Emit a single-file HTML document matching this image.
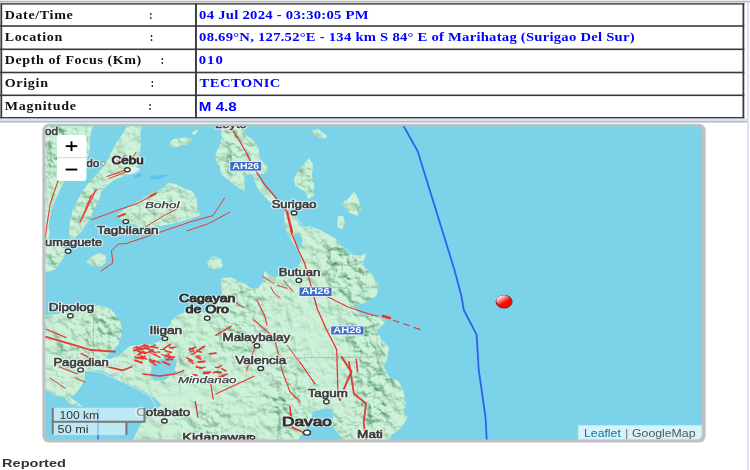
<!DOCTYPE html>
<html><head><meta charset="utf-8"><title>Earthquake Information</title>
<style>html,body{margin:0;padding:0;background:#fff;width:750px;height:470px;overflow:hidden}svg{display:block;filter:blur(0.3px)}</style>
</head><body>
<svg width="750" height="470" viewBox="0 0 750 470">
<rect x="0" y="0" width="750" height="1" fill="#e8eaee"/>
<rect x="0" y="1" width="750" height="1" fill="#a7b2c2"/>
<rect x="0" y="2" width="750" height="1" fill="#dcdcdc"/>
<rect x="747.4" y="1" width="1.3" height="469" fill="#c6d6f4"/>
<rect x="0" y="3.2" width="744.3" height="1.4" fill="#3a3a3a"/>
<rect x="0" y="3.2" width="1" height="115.2" fill="#888"/>
<rect x="1" y="3.2" width="1.2" height="115.2" fill="#3a3a3a"/>
<rect x="742.5" y="3.2" width="1.8" height="115.2" fill="#3a3a3a"/>
<rect x="0" y="117.0" width="744.3" height="1.6" fill="#3a3a3a"/>
<rect x="0" y="25.2" width="744.3" height="1.6" fill="#3a3a3a"/>
<rect x="0" y="48.5" width="744.3" height="1.6" fill="#3a3a3a"/>
<rect x="0" y="71.7" width="744.3" height="1.6" fill="#3a3a3a"/>
<rect x="0" y="94.5" width="744.3" height="1.6" fill="#3a3a3a"/>
<rect x="195" y="3.2" width="1.9" height="115.2" fill="#3a3a3a"/>
<rect x="0" y="118.6" width="747.4" height="2.2" fill="#dbe6f6"/>
<rect x="0" y="120.8" width="747.4" height="1.8" fill="#b4becc"/>
<text transform="translate(4.7,18.5) scale(1.08,1)" x="0" y="0" font-family="Liberation Serif" font-size="13.0" font-weight="bold" fill="#111" textLength="62.96" lengthAdjust="spacing" >Date/Time</text>
<text x="149.20000000000002" y="18.5" font-family="Liberation Serif" font-size="12.2" font-weight="bold" font-style="normal" fill="#111" textLength="3.2" lengthAdjust="spacingAndGlyphs" >:</text>
<text transform="translate(4.7,41.3) scale(1.08,1)" x="0" y="0" font-family="Liberation Serif" font-size="13.0" font-weight="bold" fill="#111" textLength="53.24" lengthAdjust="spacing" >Location</text>
<text x="149.9" y="41.3" font-family="Liberation Serif" font-size="12.2" font-weight="bold" font-style="normal" fill="#111" textLength="3.2" lengthAdjust="spacingAndGlyphs" >:</text>
<text transform="translate(4.7,64.3) scale(1.08,1)" x="0" y="0" font-family="Liberation Serif" font-size="13.0" font-weight="bold" fill="#111" textLength="126.48" lengthAdjust="spacing" >Depth of Focus (Km)</text>
<text x="160.70000000000002" y="64.3" font-family="Liberation Serif" font-size="12.2" font-weight="bold" font-style="normal" fill="#111" textLength="3.2" lengthAdjust="spacingAndGlyphs" >:</text>
<text transform="translate(4.7,87.1) scale(1.08,1)" x="0" y="0" font-family="Liberation Serif" font-size="13.0" font-weight="bold" fill="#111" textLength="40.09" lengthAdjust="spacing" >Origin</text>
<text x="150.8" y="87.1" font-family="Liberation Serif" font-size="12.2" font-weight="bold" font-style="normal" fill="#111" textLength="3.2" lengthAdjust="spacingAndGlyphs" >:</text>
<text transform="translate(4.7,110.0) scale(1.08,1)" x="0" y="0" font-family="Liberation Serif" font-size="13.0" font-weight="bold" fill="#111" textLength="66.11" lengthAdjust="spacing" >Magnitude</text>
<text x="148.4" y="110.0" font-family="Liberation Serif" font-size="12.2" font-weight="bold" font-style="normal" fill="#111" textLength="3.2" lengthAdjust="spacingAndGlyphs" >:</text>
<text transform="translate(199.1,18.5) scale(1.12,1)" x="0" y="0" font-family="Liberation Serif" font-size="13.1" font-weight="bold" fill="#0000ff" textLength="151.43" lengthAdjust="spacing" >04 Jul 2024 - 03:30:05 PM</text>
<text transform="translate(199.1,41.3) scale(1.12,1)" x="0" y="0" font-family="Liberation Serif" font-size="13.1" font-weight="bold" fill="#0000ff" textLength="388.84" lengthAdjust="spacing" >08.69°N, 127.52°E - 134 km S 84° E of Marihatag (Surigao Del Sur)</text>
<text transform="translate(198.8,64.1) scale(1.12,1)" x="0" y="0" font-family="Liberation Serif" font-size="13.1" font-weight="bold" fill="#0000ff" textLength="21.43" lengthAdjust="spacing" >010</text>
<text transform="translate(199.6,86.6) scale(1.12,1)" x="0" y="0" font-family="Liberation Serif" font-size="13.1" font-weight="bold" fill="#0000ff" textLength="72.14" lengthAdjust="spacing" >TECTONIC</text>
<text x="198.8" y="110.8" font-family="Liberation Sans" font-size="12.8" font-weight="bold" font-style="normal" fill="#0000ff" textLength="38.0" lengthAdjust="spacingAndGlyphs" >M 4.8</text>
<text x="2.0" y="467.0" font-family="Liberation Sans" font-size="11.7" font-weight="bold" font-style="normal" fill="#333" textLength="64.0" lengthAdjust="spacingAndGlyphs" >Reported</text>
<clipPath id="mc"><rect x="45.3" y="126.2" width="656.5000000000001" height="313.2" rx="4.5"/></clipPath>
<rect x="42.3" y="123.8" width="663.3000000000001" height="318.8" rx="6.5" fill="#c0c0c0"/>
<g clip-path="url(#mc)">
<rect x="42.3" y="123.8" width="663.3000000000001" height="318.8" fill="#7bd3e9"/>
<filter id="terr" x="40" y="120" width="670" height="330" filterUnits="userSpaceOnUse" color-interpolation-filters="sRGB"><feTurbulence type="fractalNoise" baseFrequency="0.1" numOctaves="4" seed="4" result="noise"/><feDiffuseLighting in="noise" surfaceScale="3.2" diffuseConstant="1" lighting-color="#ffffff" result="light"><feDistantLight azimuth="300" elevation="60"/></feDiffuseLighting><feColorMatrix in="light" type="matrix" values="0 0 0 0 0.30  0 0 0 0 0.56  0 0 0 0 0.40  -2.2 0 0 0 2.0" result="shade"/><feComposite in="shade" in2="SourceAlpha" operator="in"/></filter>
<filter id="mblur" x="0" y="0" width="750" height="470" filterUnits="userSpaceOnUse"><feGaussianBlur stdDeviation="9"/></filter>
<mask id="mtn" maskUnits="userSpaceOnUse" x="0" y="0" width="750" height="470"><rect x="0" y="0" width="750" height="470" fill="#585858"/><g filter="url(#mblur)"><ellipse cx="60" cy="150" rx="22" ry="30" transform="rotate(0 60 150)" fill="#fff" fill-opacity="1.0"/><ellipse cx="88" cy="205" rx="8" ry="22" transform="rotate(30 88 205)" fill="#fff" fill-opacity="0.8"/><ellipse cx="235" cy="150" rx="14" ry="22" transform="rotate(0 235 150)" fill="#fff" fill-opacity="0.9"/><ellipse cx="305" cy="180" rx="8" ry="18" transform="rotate(0 305 180)" fill="#fff" fill-opacity="0.8"/><ellipse cx="352" cy="205" rx="6" ry="10" transform="rotate(0 352 205)" fill="#fff" fill-opacity="0.7"/><ellipse cx="345" cy="270" rx="22" ry="30" transform="rotate(-30 345 270)" fill="#fff" fill-opacity="1.0"/><ellipse cx="365" cy="330" rx="16" ry="30" transform="rotate(0 365 330)" fill="#fff" fill-opacity="1.0"/><ellipse cx="375" cy="395" rx="18" ry="40" transform="rotate(0 375 395)" fill="#fff" fill-opacity="1.0"/><ellipse cx="330" cy="440" rx="16" ry="20" transform="rotate(0 330 440)" fill="#fff" fill-opacity="0.8"/><ellipse cx="245" cy="300" rx="18" ry="10" transform="rotate(20 245 300)" fill="#fff" fill-opacity="1.0"/><ellipse cx="240" cy="335" rx="20" ry="14" transform="rotate(0 240 335)" fill="#fff" fill-opacity="1.0"/><ellipse cx="285" cy="400" rx="16" ry="35" transform="rotate(0 285 400)" fill="#fff" fill-opacity="0.9"/><ellipse cx="210" cy="425" rx="18" ry="14" transform="rotate(0 210 425)" fill="#fff" fill-opacity="0.8"/><ellipse cx="105" cy="330" rx="16" ry="20" transform="rotate(0 105 330)" fill="#fff" fill-opacity="1.0"/><ellipse cx="70" cy="350" rx="20" ry="14" transform="rotate(0 70 350)" fill="#fff" fill-opacity="0.7"/><ellipse cx="175" cy="362" rx="14" ry="12" transform="rotate(0 175 362)" fill="#fff" fill-opacity="0.7"/><ellipse cx="60" cy="250" rx="12" ry="18" transform="rotate(0 60 250)" fill="#fff" fill-opacity="0.8"/><ellipse cx="160" cy="205" rx="25" ry="12" transform="rotate(-20 160 205)" fill="#fff" fill-opacity="0.6"/><ellipse cx="316" cy="340" rx="9" ry="45" transform="rotate(-10 316 340)" fill="#000" fill-opacity="0.8"/><ellipse cx="180" cy="405" rx="30" ry="18" transform="rotate(0 180 405)" fill="#000" fill-opacity="0.8"/><ellipse cx="130" cy="410" rx="14" ry="10" transform="rotate(0 130 410)" fill="#000" fill-opacity="0.8"/><ellipse cx="250" cy="275" rx="10" ry="6" transform="rotate(0 250 275)" fill="#000" fill-opacity="0.8"/></g></mask>
<polygon points="40.0,120.0 93.0,120.0 93.0,126.0 91.0,132.0 90.0,140.0 89.5,152.0 85.0,164.0 74.0,175.0 64.5,182.0 60.1,189.4 56.3,198.3 53.6,204.0 50.2,216.0 48.5,226.0 50.0,232.0 48.0,240.0 58.0,246.0 66.0,249.0 65.0,255.5 60.0,263.0 55.0,269.5 47.0,272.0 40.0,273.0" fill="#cdf2d9" />
<polygon points="126.5,120.0 142.7,120.0 142.7,125.8 140.1,132.2 141.0,143.3 140.1,151.8 139.3,157.0 137.5,164.0 136.0,168.0 130.0,173.5 124.0,176.0 113.0,180.5 104.5,188.0 101.0,192.0 99.7,198.3 95.9,206.0 92.0,213.6 89.5,220.0 86.0,224.0 81.0,232.6 73.0,239.0 69.5,238.0 69.0,232.0 70.3,220.0 72.9,209.8 76.7,202.1 80.5,194.5 85.7,186.8 90.8,180.4 97.1,174.0 103.5,166.4 107.8,159.4 112.0,150.9 117.1,141.6 123.1,133.1 127.3,125.8" fill="#cdf2d9" />
<polygon points="117.6,214.6 124.3,209.4 134.7,203.4 143.7,197.5 154.0,192.0 161.5,189.0 168.0,183.0 175.5,184.0 184.9,188.7 191.9,191.0 196.5,198.0 197.7,205.0 196.5,209.8 201.2,214.4 196.5,216.8 190.0,219.0 182.4,221.0 173.5,223.5 161.5,225.8 149.6,227.3 139.2,226.5 128.7,222.8 119.4,218.0" fill="#cdf2d9" />
<polygon points="86.0,262.0 92.0,256.0 100.0,253.0 106.0,255.0 106.0,262.0 101.0,266.5 92.0,266.0" fill="#cdf2d9" />
<polygon points="207.0,262.0 214.0,256.5 221.0,259.0 223.0,266.0 217.0,269.0 209.0,268.0" fill="#cdf2d9" />
<polygon points="168.3,145.0 173.0,139.0 181.0,138.0 186.0,137.5 192.9,139.0 190.0,144.0 182.0,145.0 175.0,147.6" fill="#cdf2d9" />
<polygon points="191.4,133.0 196.0,129.7 198.9,131.0 194.0,134.9" fill="#cdf2d9" />
<polygon points="215.0,120.0 243.0,120.0 242.1,127.3 245.6,134.4 252.7,139.7 258.0,146.7 259.8,153.8 261.5,160.9 266.8,166.2 267.7,171.5 263.3,174.0 250.0,174.5 244.0,176.0 245.0,183.0 244.5,190.9 240.3,189.1 233.3,183.8 226.2,178.5 220.9,173.2 220.0,166.2 215.6,160.9 215.6,153.8 220.0,145.0 221.8,137.9 220.9,129.1 218.0,120.0" fill="#cdf2d9" />
<polygon points="253.0,175.0 258.0,176.0 262.0,184.0 268.0,190.0 274.0,197.0 277.0,204.0 273.0,205.0 267.0,199.0 260.0,192.0 256.0,185.0" fill="#cdf2d9" />
<polygon points="312.0,130.0 318.0,129.0 327.0,136.0 325.0,139.0 318.0,137.0 313.0,134.0" fill="#cdf2d9" />
<polygon points="309.3,158.3 313.2,164.6 311.9,176.1 314.4,186.3 313.2,196.5 308.0,199.1 305.5,191.4 295.3,186.3 294.0,178.7 297.9,171.0 303.0,164.6" fill="#cdf2d9" />
<polygon points="354.0,191.4 358.0,198.0 361.6,209.3 357.0,215.7 350.0,213.0 341.2,202.9 348.0,199.0" fill="#cdf2d9" />
<polygon points="338.0,216.0 343.0,215.7 345.0,222.0 342.0,229.7 337.0,227.0" fill="#cdf2d9" />
<polygon points="210.0,257.0 216.0,256.4 222.0,262.0 220.0,269.0 212.0,268.0 210.0,263.0" fill="#cdf2d9" />
<polygon points="40.0,316.0 45.7,315.4 57.6,313.7 69.5,312.0 86.6,306.9 100.2,305.2 110.4,308.6 117.2,317.1 120.5,322.0 122.4,331.2 118.7,344.3 111.2,351.7 105.6,357.3 109.3,359.2 118.7,355.5 129.9,346.1 142.9,344.3 156.0,342.4 162.0,339.5 162.6,338.0 167.7,327.9 171.1,321.1 176.2,316.0 188.1,310.9 205.1,312.6 217.0,304.0 222.2,293.8 220.5,278.5 230.8,277.2 242.0,282.0 251.6,288.4 258.0,288.4 262.8,282.0 264.4,270.8 267.6,274.0 274.0,277.2 282.0,275.6 293.2,274.0 298.3,266.6 301.4,260.0 298.0,251.4 292.9,242.9 287.8,234.4 284.4,222.5 284.4,212.0 288.0,208.0 292.0,211.0 297.0,220.0 300.9,227.4 309.8,225.9 320.2,230.3 329.2,234.8 335.1,237.8 339.6,245.2 348.6,254.2 360.5,255.7 366.4,252.7 362.8,265.0 372.0,274.5 379.0,286.2 376.8,295.6 365.0,302.6 353.4,307.3 360.4,314.3 376.8,316.6 386.2,317.8 383.9,323.7 376.8,330.7 381.6,339.8 388.9,347.1 387.7,356.9 384.0,366.7 388.9,376.5 398.7,381.4 403.6,391.2 406.1,403.4 403.6,413.2 407.3,418.1 401.2,427.9 391.4,435.2 386.5,445.0 345.8,445.0 337.5,432.6 332.0,425.6 333.3,416.0 332.0,409.0 325.0,408.4 312.6,411.8 311.0,421.5 304.3,431.0 294.6,445.0 130.0,445.0 141.0,423.5 148.5,416.0 161.6,404.8 156.0,399.2 146.7,392.7 137.3,388.0 128.0,383.3 118.7,380.5 111.2,375.0 100.0,370.3 85.0,371.0 85.0,378.7 81.3,386.1 75.7,393.6 70.1,397.3 75.7,401.0 83.2,406.7 70.1,404.8 64.5,397.3 55.2,395.5 45.9,389.9 40.0,387.0" fill="#cdf2d9" />
<g mask="url(#mtn)"><g filter="url(#terr)">
<polygon points="40.0,120.0 93.0,120.0 93.0,126.0 91.0,132.0 90.0,140.0 89.5,152.0 85.0,164.0 74.0,175.0 64.5,182.0 60.1,189.4 56.3,198.3 53.6,204.0 50.2,216.0 48.5,226.0 50.0,232.0 48.0,240.0 58.0,246.0 66.0,249.0 65.0,255.5 60.0,263.0 55.0,269.5 47.0,272.0 40.0,273.0" fill="#cdf2d9" />
<polygon points="126.5,120.0 142.7,120.0 142.7,125.8 140.1,132.2 141.0,143.3 140.1,151.8 139.3,157.0 137.5,164.0 136.0,168.0 130.0,173.5 124.0,176.0 113.0,180.5 104.5,188.0 101.0,192.0 99.7,198.3 95.9,206.0 92.0,213.6 89.5,220.0 86.0,224.0 81.0,232.6 73.0,239.0 69.5,238.0 69.0,232.0 70.3,220.0 72.9,209.8 76.7,202.1 80.5,194.5 85.7,186.8 90.8,180.4 97.1,174.0 103.5,166.4 107.8,159.4 112.0,150.9 117.1,141.6 123.1,133.1 127.3,125.8" fill="#cdf2d9" />
<polygon points="117.6,214.6 124.3,209.4 134.7,203.4 143.7,197.5 154.0,192.0 161.5,189.0 168.0,183.0 175.5,184.0 184.9,188.7 191.9,191.0 196.5,198.0 197.7,205.0 196.5,209.8 201.2,214.4 196.5,216.8 190.0,219.0 182.4,221.0 173.5,223.5 161.5,225.8 149.6,227.3 139.2,226.5 128.7,222.8 119.4,218.0" fill="#cdf2d9" />
<polygon points="86.0,262.0 92.0,256.0 100.0,253.0 106.0,255.0 106.0,262.0 101.0,266.5 92.0,266.0" fill="#cdf2d9" />
<polygon points="207.0,262.0 214.0,256.5 221.0,259.0 223.0,266.0 217.0,269.0 209.0,268.0" fill="#cdf2d9" />
<polygon points="168.3,145.0 173.0,139.0 181.0,138.0 186.0,137.5 192.9,139.0 190.0,144.0 182.0,145.0 175.0,147.6" fill="#cdf2d9" />
<polygon points="191.4,133.0 196.0,129.7 198.9,131.0 194.0,134.9" fill="#cdf2d9" />
<polygon points="215.0,120.0 243.0,120.0 242.1,127.3 245.6,134.4 252.7,139.7 258.0,146.7 259.8,153.8 261.5,160.9 266.8,166.2 267.7,171.5 263.3,174.0 250.0,174.5 244.0,176.0 245.0,183.0 244.5,190.9 240.3,189.1 233.3,183.8 226.2,178.5 220.9,173.2 220.0,166.2 215.6,160.9 215.6,153.8 220.0,145.0 221.8,137.9 220.9,129.1 218.0,120.0" fill="#cdf2d9" />
<polygon points="253.0,175.0 258.0,176.0 262.0,184.0 268.0,190.0 274.0,197.0 277.0,204.0 273.0,205.0 267.0,199.0 260.0,192.0 256.0,185.0" fill="#cdf2d9" />
<polygon points="312.0,130.0 318.0,129.0 327.0,136.0 325.0,139.0 318.0,137.0 313.0,134.0" fill="#cdf2d9" />
<polygon points="309.3,158.3 313.2,164.6 311.9,176.1 314.4,186.3 313.2,196.5 308.0,199.1 305.5,191.4 295.3,186.3 294.0,178.7 297.9,171.0 303.0,164.6" fill="#cdf2d9" />
<polygon points="354.0,191.4 358.0,198.0 361.6,209.3 357.0,215.7 350.0,213.0 341.2,202.9 348.0,199.0" fill="#cdf2d9" />
<polygon points="338.0,216.0 343.0,215.7 345.0,222.0 342.0,229.7 337.0,227.0" fill="#cdf2d9" />
<polygon points="210.0,257.0 216.0,256.4 222.0,262.0 220.0,269.0 212.0,268.0 210.0,263.0" fill="#cdf2d9" />
<polygon points="40.0,316.0 45.7,315.4 57.6,313.7 69.5,312.0 86.6,306.9 100.2,305.2 110.4,308.6 117.2,317.1 120.5,322.0 122.4,331.2 118.7,344.3 111.2,351.7 105.6,357.3 109.3,359.2 118.7,355.5 129.9,346.1 142.9,344.3 156.0,342.4 162.0,339.5 162.6,338.0 167.7,327.9 171.1,321.1 176.2,316.0 188.1,310.9 205.1,312.6 217.0,304.0 222.2,293.8 220.5,278.5 230.8,277.2 242.0,282.0 251.6,288.4 258.0,288.4 262.8,282.0 264.4,270.8 267.6,274.0 274.0,277.2 282.0,275.6 293.2,274.0 298.3,266.6 301.4,260.0 298.0,251.4 292.9,242.9 287.8,234.4 284.4,222.5 284.4,212.0 288.0,208.0 292.0,211.0 297.0,220.0 300.9,227.4 309.8,225.9 320.2,230.3 329.2,234.8 335.1,237.8 339.6,245.2 348.6,254.2 360.5,255.7 366.4,252.7 362.8,265.0 372.0,274.5 379.0,286.2 376.8,295.6 365.0,302.6 353.4,307.3 360.4,314.3 376.8,316.6 386.2,317.8 383.9,323.7 376.8,330.7 381.6,339.8 388.9,347.1 387.7,356.9 384.0,366.7 388.9,376.5 398.7,381.4 403.6,391.2 406.1,403.4 403.6,413.2 407.3,418.1 401.2,427.9 391.4,435.2 386.5,445.0 345.8,445.0 337.5,432.6 332.0,425.6 333.3,416.0 332.0,409.0 325.0,408.4 312.6,411.8 311.0,421.5 304.3,431.0 294.6,445.0 130.0,445.0 141.0,423.5 148.5,416.0 161.6,404.8 156.0,399.2 146.7,392.7 137.3,388.0 128.0,383.3 118.7,380.5 111.2,375.0 100.0,370.3 85.0,371.0 85.0,378.7 81.3,386.1 75.7,393.6 70.1,397.3 75.7,401.0 83.2,406.7 70.1,404.8 64.5,397.3 55.2,395.5 45.9,389.9 40.0,387.0" fill="#cdf2d9" />
</g></g>
<polygon points="152.0,366.0 160.0,359.0 170.0,357.5 177.0,361.0 174.0,372.0 165.0,380.0 155.0,381.0 150.0,375.0" fill="#7bd3e9" />
<polygon points="293.5,233.5 299.0,233.0 302.4,239.0 302.0,248.0 297.0,247.0 294.0,241.0" fill="#7bd3e9" />
<ellipse cx="132" cy="171" rx="8" ry="3" fill="#eef6f2" opacity="0.8" transform="rotate(-15 132 171)"/>
<ellipse cx="138" cy="176" rx="4" ry="1.3" fill="#5dc1ee" transform="rotate(-25 138 176)"/>
<ellipse cx="153" cy="177" rx="3.5" ry="1.2" fill="#5dc1ee" transform="rotate(-25 153 177)"/>
<ellipse cx="160" cy="177" rx="8" ry="1.5" fill="#5dc1ee" transform="rotate(-15 160 177)"/>
<polyline points="207.0,318.0 222.0,326.0 240.0,338.0 257.0,346.0 261.0,368.0 275.0,385.0 290.0,405.0 307.0,432.0" fill="none" stroke="#d9e2dc" stroke-width="1.0" stroke-linejoin="round" stroke-linecap="round" opacity="0.9"/>
<polyline points="299.0,280.0 306.0,296.0 326.0,318.0 345.0,340.0 336.0,370.0 326.0,402.0 318.0,410.0" fill="none" stroke="#d9e2dc" stroke-width="1.0" stroke-linejoin="round" stroke-linecap="round" opacity="0.9"/>
<polyline points="165.0,338.0 176.0,352.0 180.0,370.0 164.0,421.0" fill="none" stroke="#d9e2dc" stroke-width="1.0" stroke-linejoin="round" stroke-linecap="round" opacity="0.9"/>
<polyline points="80.0,370.0 100.0,372.0 125.0,383.0 150.0,396.0 164.0,421.0" fill="none" stroke="#d9e2dc" stroke-width="1.0" stroke-linejoin="round" stroke-linecap="round" opacity="0.9"/>
<polyline points="70.0,316.0 82.0,330.0 80.0,370.0" fill="none" stroke="#d9e2dc" stroke-width="1.0" stroke-linejoin="round" stroke-linecap="round" opacity="0.9"/>
<polyline points="294.0,213.0 300.0,222.0 306.0,234.0 320.0,236.0 345.0,248.0 360.0,262.0 372.0,290.0" fill="none" stroke="#d9e2dc" stroke-width="1.0" stroke-linejoin="round" stroke-linecap="round" opacity="0.9"/>
<polyline points="326.0,402.0 345.0,410.0 372.0,430.0" fill="none" stroke="#d9e2dc" stroke-width="1.0" stroke-linejoin="round" stroke-linecap="round" opacity="0.9"/>
<polyline points="280.0,358.0 381.0,357.0" fill="none" stroke="#8fa497" stroke-width="0.7" stroke-linejoin="round" stroke-linecap="round" stroke-dasharray="1.5,1.5"/>
<polyline points="93.4,310.0 93.4,362.0" fill="none" stroke="#8fa497" stroke-width="0.7" stroke-linejoin="round" stroke-linecap="round" stroke-dasharray="1.5,1.5"/>
<polyline points="101.0,271.0 113.0,262.8 111.4,251.0 118.2,244.0 125.8,243.7 152.6,234.7 190.0,222.0 212.9,215.6 224.6,198.0" fill="none" stroke="#e53935" stroke-width="1.0" stroke-linejoin="round" stroke-linecap="round" />
<polyline points="187.2,230.8 208.2,223.8 230.0,212.0" fill="none" stroke="#e53935" stroke-width="1.0" stroke-linejoin="round" stroke-linecap="round" />
<polyline points="91.5,219.8 119.8,209.4 137.7,203.4 149.6,196.7 155.0,194.0" fill="none" stroke="#e53935" stroke-width="1.0" stroke-linejoin="round" stroke-linecap="round" />
<polyline points="143.7,228.0 164.5,215.3 178.0,208.6" fill="none" stroke="#e53935" stroke-width="1.0" stroke-linejoin="round" stroke-linecap="round" />
<polyline points="90.0,197.5 96.0,190.0" fill="none" stroke="#e53935" stroke-width="1.0" stroke-linejoin="round" stroke-linecap="round" />
<polyline points="150.0,196.5 155.5,193.5" fill="none" stroke="#e53935" stroke-width="2.2" stroke-linejoin="round" stroke-linecap="round" />
<polyline points="118.5,216.5 125.0,214.0" fill="none" stroke="#e53935" stroke-width="2.0" stroke-linejoin="round" stroke-linecap="round" />
<polyline points="62.0,170.0 57.0,183.6 50.2,204.0 46.8,226.0 45.0,240.0" fill="none" stroke="#e53935" stroke-width="1.1" stroke-linejoin="round" stroke-linecap="round" />
<polyline points="96.0,190.0 89.0,204.0 84.0,214.0 80.0,222.0" fill="none" stroke="#e53935" stroke-width="1.3" stroke-linejoin="round" stroke-linecap="round" />
<polyline points="91.0,196.0 86.0,208.0 82.0,218.0" fill="none" stroke="#e53935" stroke-width="1.1" stroke-linejoin="round" stroke-linecap="round" />
<polyline points="107.0,176.5 124.0,170.5" fill="none" stroke="#e53935" stroke-width="1.2" stroke-linejoin="round" stroke-linecap="round" />
<polyline points="109.0,178.5 126.0,172.0" fill="none" stroke="#e53935" stroke-width="1.0" stroke-linejoin="round" stroke-linecap="round" />
<polyline points="113.8,164.3 125.7,154.9" fill="none" stroke="#e53935" stroke-width="1.0" stroke-linejoin="round" stroke-linecap="round" />
<polyline points="129.0,164.3 136.0,152.3" fill="none" stroke="#e53935" stroke-width="1.0" stroke-linejoin="round" stroke-linecap="round" />
<polyline points="228.5,124.0 239.0,140.0 246.0,152.0 252.6,165.6 265.0,185.0 277.0,199.0 287.7,213.0 291.2,232.3 298.7,250.7 304.4,262.8 310.4,283.5 317.4,309.2 326.8,330.3 336.7,349.6 338.0,393.7" fill="none" stroke="#e53935" stroke-width="1.3" stroke-linejoin="round" stroke-linecap="round" />
<polyline points="287.0,212.0 290.0,224.0 292.0,232.0" fill="none" stroke="#e53935" stroke-width="2.4" stroke-linejoin="round" stroke-linecap="round" />
<polyline points="319.8,292.8 347.8,306.9 372.0,315.0" fill="none" stroke="#e53935" stroke-width="1.1" stroke-linejoin="round" stroke-linecap="round" />
<polyline points="262.8,276.4 274.0,283.6" fill="none" stroke="#e53935" stroke-width="1.0" stroke-linejoin="round" stroke-linecap="round" />
<polyline points="270.8,286.8 274.0,293.2 280.4,298.0" fill="none" stroke="#e53935" stroke-width="1.0" stroke-linejoin="round" stroke-linecap="round" />
<polyline points="277.2,285.2 286.8,288.4" fill="none" stroke="#e53935" stroke-width="1.0" stroke-linejoin="round" stroke-linecap="round" />
<polyline points="283.6,280.4 293.2,291.6" fill="none" stroke="#e53935" stroke-width="1.0" stroke-linejoin="round" stroke-linecap="round" />
<polyline points="257.0,300.0 264.6,315.7 267.0,325.0" fill="none" stroke="#e53935" stroke-width="1.1" stroke-linejoin="round" stroke-linecap="round" />
<polyline points="254.0,320.0 274.5,337.9 282.2,371.0 289.9,391.5 300.0,401.8" fill="none" stroke="#e53935" stroke-width="1.1" stroke-linejoin="round" stroke-linecap="round" />
<polyline points="287.3,345.5 315.4,383.9" fill="none" stroke="#e53935" stroke-width="1.0" stroke-linejoin="round" stroke-linecap="round" />
<polyline points="256.6,343.0 246.4,371.0" fill="none" stroke="#e53935" stroke-width="1.0" stroke-linejoin="round" stroke-linecap="round" />
<polyline points="215.8,335.3 231.1,326.4" fill="none" stroke="#e53935" stroke-width="1.5" stroke-linejoin="round" stroke-linecap="round" />
<polyline points="215.8,394.0 254.0,376.2" fill="none" stroke="#e53935" stroke-width="1.1" stroke-linejoin="round" stroke-linecap="round" />
<polyline points="210.7,383.9 213.2,399.2" fill="none" stroke="#e53935" stroke-width="1.2" stroke-linejoin="round" stroke-linecap="round" />
<polyline points="195.3,401.8 197.9,417.0" fill="none" stroke="#e53935" stroke-width="1.4" stroke-linejoin="round" stroke-linecap="round" />
<polyline points="289.9,406.9 292.4,427.3 302.6,432.4" fill="none" stroke="#e53935" stroke-width="1.6" stroke-linejoin="round" stroke-linecap="round" />
<polyline points="236.5,303.0 244.0,308.0" fill="none" stroke="#e53935" stroke-width="1.0" stroke-linejoin="round" stroke-linecap="round" />
<polyline points="300.0,361.8 314.7,383.9" fill="none" stroke="#e53935" stroke-width="1.0" stroke-linejoin="round" stroke-linecap="round" />
<polyline points="341.6,357.0 351.4,371.6 344.0,388.8" fill="none" stroke="#e53935" stroke-width="2.0" stroke-linejoin="round" stroke-linecap="round" />
<polyline points="349.0,361.8 353.9,393.7 366.0,403.5 363.7,423.0 366.0,441.0" fill="none" stroke="#e53935" stroke-width="1.8" stroke-linejoin="round" stroke-linecap="round" />
<polyline points="356.3,359.4 357.6,371.6" fill="none" stroke="#e53935" stroke-width="1.6" stroke-linejoin="round" stroke-linecap="round" />
<polyline points="338.0,393.7 340.0,400.0" fill="none" stroke="#e53935" stroke-width="2.0" stroke-linejoin="round" stroke-linecap="round" />
<polyline points="45.9,336.8 72.0,344.3 90.7,350.0 115.0,351.7" fill="none" stroke="#e53935" stroke-width="1.8" stroke-linejoin="round" stroke-linecap="round" />
<polyline points="81.3,353.6 107.5,366.7 122.4,370.4 131.7,366.7" fill="none" stroke="#e53935" stroke-width="1.6" stroke-linejoin="round" stroke-linecap="round" />
<polyline points="45.7,329.0 66.1,337.6" fill="none" stroke="#e53935" stroke-width="1.2" stroke-linejoin="round" stroke-linecap="round" />
<polyline points="59.0,366.7 77.6,374.0" fill="none" stroke="#e53935" stroke-width="1.1" stroke-linejoin="round" stroke-linecap="round" />
<polyline points="143.0,374.0 159.7,376.0 174.7,374.0 184.0,370.4" fill="none" stroke="#e53935" stroke-width="1.3" stroke-linejoin="round" stroke-linecap="round" />
<polyline points="50.0,378.0 65.0,388.0" fill="none" stroke="#e53935" stroke-width="1.0" stroke-linejoin="round" stroke-linecap="round" />
<polyline points="75.0,378.0 85.0,382.0" fill="none" stroke="#e53935" stroke-width="1.0" stroke-linejoin="round" stroke-linecap="round" />
<polyline points="145.0,348.4 148.3,349.0" fill="none" stroke="#e53935" stroke-width="1.643058405168027" stroke-linejoin="round" stroke-linecap="round" />
<polyline points="146.5,346.9 149.7,347.0" fill="none" stroke="#e53935" stroke-width="1.520374820394863" stroke-linejoin="round" stroke-linecap="round" />
<polyline points="135.6,347.5 142.7,346.8" fill="none" stroke="#e53935" stroke-width="1.1485623533795748" stroke-linejoin="round" stroke-linecap="round" />
<polyline points="141.3,356.0 146.3,359.1" fill="none" stroke="#e53935" stroke-width="1.4760165695809362" stroke-linejoin="round" stroke-linecap="round" />
<polyline points="169.1,346.7 173.2,348.6" fill="none" stroke="#e53935" stroke-width="1.1731061000289251" stroke-linejoin="round" stroke-linecap="round" />
<polyline points="137.4,350.9 141.0,352.4" fill="none" stroke="#e53935" stroke-width="1.6979201963949597" stroke-linejoin="round" stroke-linecap="round" />
<polyline points="156.6,352.0 159.9,352.1" fill="none" stroke="#e53935" stroke-width="1.0715214039594791" stroke-linejoin="round" stroke-linecap="round" />
<polyline points="140.6,356.9 145.2,356.5" fill="none" stroke="#e53935" stroke-width="1.7026742362091665" stroke-linejoin="round" stroke-linecap="round" />
<polyline points="149.8,350.8 155.9,353.0" fill="none" stroke="#e53935" stroke-width="1.2929158128665836" stroke-linejoin="round" stroke-linecap="round" />
<polyline points="154.3,354.4 160.2,357.3" fill="none" stroke="#e53935" stroke-width="1.3455253178682238" stroke-linejoin="round" stroke-linecap="round" />
<polyline points="169.3,347.9 176.0,347.2" fill="none" stroke="#e53935" stroke-width="1.1823814415926057" stroke-linejoin="round" stroke-linecap="round" />
<polyline points="151.1,346.6 157.8,348.0" fill="none" stroke="#e53935" stroke-width="1.6876311283328609" stroke-linejoin="round" stroke-linecap="round" />
<polyline points="165.4,351.0 171.2,352.4" fill="none" stroke="#e53935" stroke-width="1.6958742451389908" stroke-linejoin="round" stroke-linecap="round" />
<polyline points="149.9,359.4 154.5,362.2" fill="none" stroke="#e53935" stroke-width="1.7969826465696095" stroke-linejoin="round" stroke-linecap="round" />
<polyline points="135.2,357.2 143.1,358.6" fill="none" stroke="#e53935" stroke-width="1.986309743931658" stroke-linejoin="round" stroke-linecap="round" />
<polyline points="143.5,352.2 146.6,352.8" fill="none" stroke="#e53935" stroke-width="1.554034343559719" stroke-linejoin="round" stroke-linecap="round" />
<polyline points="139.2,347.9 145.1,344.4" fill="none" stroke="#e53935" stroke-width="1.155208266422421" stroke-linejoin="round" stroke-linecap="round" />
<polyline points="142.2,352.3 145.2,353.7" fill="none" stroke="#e53935" stroke-width="1.539024881139197" stroke-linejoin="round" stroke-linecap="round" />
<polyline points="153.3,360.1 160.1,362.9" fill="none" stroke="#e53935" stroke-width="1.3341052774166766" stroke-linejoin="round" stroke-linecap="round" />
<polyline points="148.4,351.7 155.3,355.2" fill="none" stroke="#e53935" stroke-width="1.1811050869493307" stroke-linejoin="round" stroke-linecap="round" />
<polyline points="139.5,349.7 144.7,348.0" fill="none" stroke="#e53935" stroke-width="1.706948204478707" stroke-linejoin="round" stroke-linecap="round" />
<polyline points="142.7,346.1 147.5,345.6" fill="none" stroke="#e53935" stroke-width="1.6796094684476706" stroke-linejoin="round" stroke-linecap="round" />
<polyline points="168.3,357.0 174.4,357.2" fill="none" stroke="#e53935" stroke-width="1.8114400989394017" stroke-linejoin="round" stroke-linecap="round" />
<polyline points="135.0,360.4 142.0,362.8" fill="none" stroke="#e53935" stroke-width="1.9574477454358794" stroke-linejoin="round" stroke-linecap="round" />
<polyline points="147.5,352.4 153.0,349.6" fill="none" stroke="#e53935" stroke-width="1.0746973859424251" stroke-linejoin="round" stroke-linecap="round" />
<polyline points="135.5,349.3 139.8,347.5" fill="none" stroke="#e53935" stroke-width="1.0630907246683203" stroke-linejoin="round" stroke-linecap="round" />
<polyline points="133.0,348.4 137.3,346.2" fill="none" stroke="#e53935" stroke-width="1.0306010639993748" stroke-linejoin="round" stroke-linecap="round" />
<polyline points="165.4,355.8 169.2,354.1" fill="none" stroke="#e53935" stroke-width="1.416867455264442" stroke-linejoin="round" stroke-linecap="round" />
<polyline points="146.5,348.0 153.8,351.2" fill="none" stroke="#e53935" stroke-width="1.5591873509919205" stroke-linejoin="round" stroke-linecap="round" />
<polyline points="150.9,347.4 155.1,345.2" fill="none" stroke="#e53935" stroke-width="1.3177082700606162" stroke-linejoin="round" stroke-linecap="round" />
<polyline points="163.7,348.6 170.2,344.4" fill="none" stroke="#e53935" stroke-width="1.6339088740505499" stroke-linejoin="round" stroke-linecap="round" />
<polyline points="138.4,354.7 143.2,351.7" fill="none" stroke="#e53935" stroke-width="2.1742014912627674" stroke-linejoin="round" stroke-linecap="round" />
<polyline points="164.9,357.1 169.6,355.8" fill="none" stroke="#e53935" stroke-width="1.2004504414412036" stroke-linejoin="round" stroke-linecap="round" />
<polyline points="161.6,354.5 166.0,356.0" fill="none" stroke="#e53935" stroke-width="1.2676500077238222" stroke-linejoin="round" stroke-linecap="round" />
<polyline points="163.0,361.8 169.4,364.6" fill="none" stroke="#e53935" stroke-width="1.981999531990448" stroke-linejoin="round" stroke-linecap="round" />
<polyline points="160.4,349.6 165.2,349.7" fill="none" stroke="#e53935" stroke-width="1.0347761808896385" stroke-linejoin="round" stroke-linecap="round" />
<polyline points="134.0,350.5 140.2,348.6" fill="none" stroke="#e53935" stroke-width="2.1478180916096052" stroke-linejoin="round" stroke-linecap="round" />
<polyline points="149.5,361.0 156.0,365.3" fill="none" stroke="#e53935" stroke-width="1.4375630624342395" stroke-linejoin="round" stroke-linecap="round" />
<polyline points="141.2,349.6 144.9,348.2" fill="none" stroke="#e53935" stroke-width="1.748879676925382" stroke-linejoin="round" stroke-linecap="round" />
<polyline points="166.3,359.4 172.6,359.3" fill="none" stroke="#e53935" stroke-width="1.9595724938195924" stroke-linejoin="round" stroke-linecap="round" />
<polyline points="187.1,357.9 192.5,360.8" fill="none" stroke="#e53935" stroke-width="1.7501404598304584" stroke-linejoin="round" stroke-linecap="round" />
<polyline points="197.0,350.7 201.0,352.2" fill="none" stroke="#e53935" stroke-width="1.800823568896691" stroke-linejoin="round" stroke-linecap="round" />
<polyline points="209.3,353.9 216.0,353.1" fill="none" stroke="#e53935" stroke-width="1.7247986656342151" stroke-linejoin="round" stroke-linecap="round" />
<polyline points="189.3,349.9 195.3,347.2" fill="none" stroke="#e53935" stroke-width="1.8065019820321961" stroke-linejoin="round" stroke-linecap="round" />
<polyline points="188.7,360.4 193.4,363.5" fill="none" stroke="#e53935" stroke-width="1.3504075121575028" stroke-linejoin="round" stroke-linecap="round" />
<polyline points="198.7,350.0 204.5,346.2" fill="none" stroke="#e53935" stroke-width="1.6496746696738307" stroke-linejoin="round" stroke-linecap="round" />
<polyline points="198.2,362.0 204.6,361.5" fill="none" stroke="#e53935" stroke-width="1.826155251815221" stroke-linejoin="round" stroke-linecap="round" />
<polyline points="190.3,351.8 194.1,350.8" fill="none" stroke="#e53935" stroke-width="1.5864371681659617" stroke-linejoin="round" stroke-linecap="round" />
<polyline points="191.5,354.3 197.5,351.4" fill="none" stroke="#e53935" stroke-width="1.353784023953259" stroke-linejoin="round" stroke-linecap="round" />
<polyline points="196.5,356.8 200.6,358.9" fill="none" stroke="#e53935" stroke-width="1.9177210843426642" stroke-linejoin="round" stroke-linecap="round" />
<polyline points="197.5,356.0 200.6,356.1" fill="none" stroke="#e53935" stroke-width="1.4401249123849433" stroke-linejoin="round" stroke-linecap="round" />
<polyline points="189.6,348.1 193.0,349.4" fill="none" stroke="#e53935" stroke-width="1.4734929324619563" stroke-linejoin="round" stroke-linecap="round" />
<polyline points="213.4,372.7 218.3,371.6" fill="none" stroke="#e53935" stroke-width="1.555441874880247" stroke-linejoin="round" stroke-linecap="round" />
<polyline points="215.4,367.3 219.4,367.6" fill="none" stroke="#e53935" stroke-width="1.2769170704647816" stroke-linejoin="round" stroke-linecap="round" />
<polyline points="215.0,372.1 221.1,372.5" fill="none" stroke="#e53935" stroke-width="1.912488036329812" stroke-linejoin="round" stroke-linecap="round" />
<polyline points="203.5,373.4 208.6,373.4" fill="none" stroke="#e53935" stroke-width="1.6927310025482292" stroke-linejoin="round" stroke-linecap="round" />
<polyline points="203.8,372.4 210.6,372.2" fill="none" stroke="#e53935" stroke-width="1.6992178821802857" stroke-linejoin="round" stroke-linecap="round" />
<polyline points="218.7,377.3 223.7,375.8" fill="none" stroke="#e53935" stroke-width="1.9432670340134837" stroke-linejoin="round" stroke-linecap="round" />
<polyline points="217.4,367.6 221.7,365.6" fill="none" stroke="#e53935" stroke-width="1.0725460996564884" stroke-linejoin="round" stroke-linecap="round" />
<polyline points="196.4,366.9 202.4,368.1" fill="none" stroke="#e53935" stroke-width="1.897026432878767" stroke-linejoin="round" stroke-linecap="round" />
<polyline points="193.4,374.6 196.9,375.3" fill="none" stroke="#e53935" stroke-width="1.8828328336570754" stroke-linejoin="round" stroke-linecap="round" />
<polyline points="221.9,368.6 225.8,371.0" fill="none" stroke="#e53935" stroke-width="1.4872607749908802" stroke-linejoin="round" stroke-linecap="round" />
<polyline points="222.6,376.0 227.0,374.1" fill="none" stroke="#e53935" stroke-width="1.515605057804359" stroke-linejoin="round" stroke-linecap="round" />
<polyline points="199.9,368.3 205.6,367.1" fill="none" stroke="#e53935" stroke-width="1.0194829280523932" stroke-linejoin="round" stroke-linecap="round" />
<polyline points="372.0,315.0 386.2,317.8 423.7,330.7" fill="none" stroke="#e53935" stroke-width="1.1" stroke-linejoin="round" stroke-linecap="round" stroke-dasharray="6,5"/>
<polyline points="383.0,316.0 390.0,318.0" fill="none" stroke="#e53935" stroke-width="2.6" stroke-linejoin="round" stroke-linecap="round" />
<polyline points="402.5,124.0 417.7,151.2 454.5,270.0 461.3,295.5 463.8,310.0 476.6,334.6 478.7,369.5 485.6,418.0 487.0,446.0" fill="none" stroke="#3160ee" stroke-width="1.8" stroke-linejoin="round" stroke-linecap="round" />
<text x="45" y="135" font-family="Liberation Sans" font-size="10.5" font-weight="normal" font-style="normal" fill="#fff" textLength="13" lengthAdjust="spacingAndGlyphs" stroke="#f4fbfb" stroke-width="2.6" stroke-opacity="0.75" fill-opacity="0.75" stroke-linejoin="round">od</text><text x="45" y="135" font-family="Liberation Sans" font-size="10.5" font-weight="normal" font-style="normal" fill="#3c3c3c" textLength="13" lengthAdjust="spacingAndGlyphs" stroke="#3c3c3c" stroke-width="0.6">od</text>
<text x="86.6" y="166.6" font-family="Liberation Sans" font-size="10.5" font-weight="normal" font-style="normal" fill="#fff" textLength="12.6" lengthAdjust="spacingAndGlyphs" stroke="#f4fbfb" stroke-width="2.6" stroke-opacity="0.75" fill-opacity="0.75" stroke-linejoin="round">do</text><text x="86.6" y="166.6" font-family="Liberation Sans" font-size="10.5" font-weight="normal" font-style="normal" fill="#3c3c3c" textLength="12.6" lengthAdjust="spacingAndGlyphs" stroke="#3c3c3c" stroke-width="0.6">do</text>
<ellipse cx="103.4" cy="163.6" rx="2" ry="1.6" fill="#fff" stroke="#888" stroke-width="1"/>
<text x="111.5" y="164.2" font-family="Liberation Sans" font-size="10.8" font-weight="normal" font-style="normal" fill="#fff" textLength="32.1" lengthAdjust="spacingAndGlyphs" stroke="#f4fbfb" stroke-width="2.6" stroke-opacity="0.75" fill-opacity="0.75" stroke-linejoin="round">Cebu</text><text x="111.5" y="164.2" font-family="Liberation Sans" font-size="10.8" font-weight="normal" font-style="normal" fill="#333" textLength="32.1" lengthAdjust="spacingAndGlyphs" stroke="#333" stroke-width="0.95">Cebu</text>
<ellipse cx="127.4" cy="169.8" rx="2.76" ry="2.04" fill="#fff" stroke="#333" stroke-width="1.35"/>
<text x="145.1" y="207.9" font-family="Liberation Sans" font-size="9.4" font-weight="normal" font-style="italic" fill="#fff" textLength="34.3" lengthAdjust="spacingAndGlyphs" stroke="#f4fbfb" stroke-width="2.6" stroke-opacity="0.75" fill-opacity="0.75" stroke-linejoin="round">Bohol</text><text x="145.1" y="207.9" font-family="Liberation Sans" font-size="9.4" font-weight="normal" font-style="italic" fill="#3c3c3c" textLength="34.3" lengthAdjust="spacingAndGlyphs" stroke="#3c3c3c" stroke-width="0.25">Bohol</text>
<ellipse cx="125.8" cy="221.6" rx="2.76" ry="2.04" fill="#fff" stroke="#333" stroke-width="1.35"/>
<text x="96.7" y="234.0" font-family="Liberation Sans" font-size="10.5" font-weight="normal" font-style="normal" fill="#fff" textLength="61.9" lengthAdjust="spacingAndGlyphs" stroke="#f4fbfb" stroke-width="2.6" stroke-opacity="0.75" fill-opacity="0.75" stroke-linejoin="round">Tagbilaran</text><text x="96.7" y="234.0" font-family="Liberation Sans" font-size="10.5" font-weight="normal" font-style="normal" fill="#3c3c3c" textLength="61.9" lengthAdjust="spacingAndGlyphs" stroke="#3c3c3c" stroke-width="0.6">Tagbilaran</text>
<text x="45.1" y="246.2" font-family="Liberation Sans" font-size="10.5" font-weight="normal" font-style="normal" fill="#fff" textLength="57" lengthAdjust="spacingAndGlyphs" stroke="#f4fbfb" stroke-width="2.6" stroke-opacity="0.75" fill-opacity="0.75" stroke-linejoin="round">umaguete</text><text x="45.1" y="246.2" font-family="Liberation Sans" font-size="10.5" font-weight="normal" font-style="normal" fill="#3c3c3c" textLength="57" lengthAdjust="spacingAndGlyphs" stroke="#3c3c3c" stroke-width="0.6">umaguete</text>
<ellipse cx="68.1" cy="251.3" rx="2.76" ry="2.04" fill="#fff" stroke="#333" stroke-width="1.35"/>
<text x="214.9" y="128.0" font-family="Liberation Sans" font-size="10.5" font-weight="normal" font-style="normal" fill="#fff" textLength="31.9" lengthAdjust="spacingAndGlyphs" stroke="#f4fbfb" stroke-width="2.6" stroke-opacity="0.75" fill-opacity="0.75" stroke-linejoin="round">Leyte</text><text x="214.9" y="128.0" font-family="Liberation Sans" font-size="10.5" font-weight="normal" font-style="normal" fill="#3c3c3c" textLength="31.9" lengthAdjust="spacingAndGlyphs" stroke="#3c3c3c" stroke-width="0.6">Leyte</text>
<text x="271.7" y="208.1" font-family="Liberation Sans" font-size="10.5" font-weight="normal" font-style="normal" fill="#fff" textLength="44.7" lengthAdjust="spacingAndGlyphs" stroke="#f4fbfb" stroke-width="2.6" stroke-opacity="0.75" fill-opacity="0.75" stroke-linejoin="round">Surigao</text><text x="271.7" y="208.1" font-family="Liberation Sans" font-size="10.5" font-weight="normal" font-style="normal" fill="#3c3c3c" textLength="44.7" lengthAdjust="spacingAndGlyphs" stroke="#3c3c3c" stroke-width="0.6">Surigao</text>
<ellipse cx="294" cy="213" rx="2.76" ry="2.04" fill="#fff" stroke="#333" stroke-width="1.35"/>
<text x="278.8" y="275.6" font-family="Liberation Sans" font-size="10.5" font-weight="normal" font-style="normal" fill="#fff" textLength="41.6" lengthAdjust="spacingAndGlyphs" stroke="#f4fbfb" stroke-width="2.6" stroke-opacity="0.75" fill-opacity="0.75" stroke-linejoin="round">Butuan</text><text x="278.8" y="275.6" font-family="Liberation Sans" font-size="10.5" font-weight="normal" font-style="normal" fill="#3c3c3c" textLength="41.6" lengthAdjust="spacingAndGlyphs" stroke="#3c3c3c" stroke-width="0.6">Butuan</text>
<ellipse cx="298.8" cy="280.4" rx="2.76" ry="2.04" fill="#fff" stroke="#333" stroke-width="1.35"/>
<text x="48.8" y="311.2" font-family="Liberation Sans" font-size="10.5" font-weight="normal" font-style="normal" fill="#fff" textLength="45.4" lengthAdjust="spacingAndGlyphs" stroke="#f4fbfb" stroke-width="2.6" stroke-opacity="0.75" fill-opacity="0.75" stroke-linejoin="round">Dipolog</text><text x="48.8" y="311.2" font-family="Liberation Sans" font-size="10.5" font-weight="normal" font-style="normal" fill="#3c3c3c" textLength="45.4" lengthAdjust="spacingAndGlyphs" stroke="#3c3c3c" stroke-width="0.6">Dipolog</text>
<ellipse cx="70.4" cy="315.8" rx="2.76" ry="2.04" fill="#fff" stroke="#333" stroke-width="1.35"/>
<text x="179.1" y="301.7" font-family="Liberation Sans" font-size="10.5" font-weight="normal" font-style="normal" fill="#fff" textLength="56.2" lengthAdjust="spacingAndGlyphs" stroke="#f4fbfb" stroke-width="2.6" stroke-opacity="0.75" fill-opacity="0.75" stroke-linejoin="round">Cagayan</text><text x="179.1" y="301.7" font-family="Liberation Sans" font-size="10.5" font-weight="normal" font-style="normal" fill="#333" textLength="56.2" lengthAdjust="spacingAndGlyphs" stroke="#333" stroke-width="0.95">Cagayan</text>
<text x="185.5" y="313.2" font-family="Liberation Sans" font-size="10.5" font-weight="normal" font-style="normal" fill="#fff" textLength="43.4" lengthAdjust="spacingAndGlyphs" stroke="#f4fbfb" stroke-width="2.6" stroke-opacity="0.75" fill-opacity="0.75" stroke-linejoin="round">de Oro</text><text x="185.5" y="313.2" font-family="Liberation Sans" font-size="10.5" font-weight="normal" font-style="normal" fill="#333" textLength="43.4" lengthAdjust="spacingAndGlyphs" stroke="#333" stroke-width="0.95">de Oro</text>
<ellipse cx="207.2" cy="318.3" rx="2.76" ry="2.04" fill="#fff" stroke="#333" stroke-width="1.35"/>
<text x="149.5" y="333.8" font-family="Liberation Sans" font-size="10.5" font-weight="normal" font-style="normal" fill="#fff" textLength="32.7" lengthAdjust="spacingAndGlyphs" stroke="#f4fbfb" stroke-width="2.6" stroke-opacity="0.75" fill-opacity="0.75" stroke-linejoin="round">Iligan</text><text x="149.5" y="333.8" font-family="Liberation Sans" font-size="10.5" font-weight="normal" font-style="normal" fill="#3c3c3c" textLength="32.7" lengthAdjust="spacingAndGlyphs" stroke="#3c3c3c" stroke-width="0.6">Iligan</text>
<ellipse cx="164.9" cy="338.6" rx="2.76" ry="2.04" fill="#fff" stroke="#333" stroke-width="1.35"/>
<text x="222.5" y="341.2" font-family="Liberation Sans" font-size="10.5" font-weight="normal" font-style="normal" fill="#fff" textLength="67.6" lengthAdjust="spacingAndGlyphs" stroke="#f4fbfb" stroke-width="2.6" stroke-opacity="0.75" fill-opacity="0.75" stroke-linejoin="round">Malaybalay</text><text x="222.5" y="341.2" font-family="Liberation Sans" font-size="10.5" font-weight="normal" font-style="normal" fill="#3c3c3c" textLength="67.6" lengthAdjust="spacingAndGlyphs" stroke="#3c3c3c" stroke-width="0.6">Malaybalay</text>
<ellipse cx="256.9" cy="345.8" rx="2.76" ry="2.04" fill="#fff" stroke="#333" stroke-width="1.35"/>
<text x="235.3" y="364.2" font-family="Liberation Sans" font-size="10.5" font-weight="normal" font-style="normal" fill="#fff" textLength="51" lengthAdjust="spacingAndGlyphs" stroke="#f4fbfb" stroke-width="2.6" stroke-opacity="0.75" fill-opacity="0.75" stroke-linejoin="round">Valencia</text><text x="235.3" y="364.2" font-family="Liberation Sans" font-size="10.5" font-weight="normal" font-style="normal" fill="#3c3c3c" textLength="51" lengthAdjust="spacingAndGlyphs" stroke="#3c3c3c" stroke-width="0.6">Valencia</text>
<ellipse cx="260.8" cy="368.5" rx="2.76" ry="2.04" fill="#fff" stroke="#333" stroke-width="1.35"/>
<text x="53.4" y="365.6" font-family="Liberation Sans" font-size="10.5" font-weight="normal" font-style="normal" fill="#fff" textLength="55.3" lengthAdjust="spacingAndGlyphs" stroke="#f4fbfb" stroke-width="2.6" stroke-opacity="0.75" fill-opacity="0.75" stroke-linejoin="round">Pagadian</text><text x="53.4" y="365.6" font-family="Liberation Sans" font-size="10.5" font-weight="normal" font-style="normal" fill="#3c3c3c" textLength="55.3" lengthAdjust="spacingAndGlyphs" stroke="#3c3c3c" stroke-width="0.6">Pagadian</text>
<ellipse cx="80.6" cy="369.9" rx="2.76" ry="2.04" fill="#fff" stroke="#333" stroke-width="1.35"/>
<text x="177.9" y="382.6" font-family="Liberation Sans" font-size="9.4" font-weight="normal" font-style="italic" fill="#fff" textLength="58.6" lengthAdjust="spacingAndGlyphs" stroke="#f4fbfb" stroke-width="2.6" stroke-opacity="0.75" fill-opacity="0.75" stroke-linejoin="round">Mindanao</text><text x="177.9" y="382.6" font-family="Liberation Sans" font-size="9.4" font-weight="normal" font-style="italic" fill="#3c3c3c" textLength="58.6" lengthAdjust="spacingAndGlyphs" stroke="#3c3c3c" stroke-width="0.25">Mindanao</text>
<text x="307.7" y="396.6" font-family="Liberation Sans" font-size="10.5" font-weight="normal" font-style="normal" fill="#fff" textLength="40.1" lengthAdjust="spacingAndGlyphs" stroke="#f4fbfb" stroke-width="2.6" stroke-opacity="0.75" fill-opacity="0.75" stroke-linejoin="round">Tagum</text><text x="307.7" y="396.6" font-family="Liberation Sans" font-size="10.5" font-weight="normal" font-style="normal" fill="#3c3c3c" textLength="40.1" lengthAdjust="spacingAndGlyphs" stroke="#3c3c3c" stroke-width="0.6">Tagum</text>
<ellipse cx="326.4" cy="401.7" rx="2.76" ry="2.04" fill="#fff" stroke="#333" stroke-width="1.35"/>
<text x="282.1" y="425.6" font-family="Liberation Sans" font-size="12.6" font-weight="normal" font-style="normal" fill="#fff" textLength="49.8" lengthAdjust="spacingAndGlyphs" stroke="#f4fbfb" stroke-width="2.6" stroke-opacity="0.75" fill-opacity="0.75" stroke-linejoin="round">Davao</text><text x="282.1" y="425.6" font-family="Liberation Sans" font-size="12.6" font-weight="normal" font-style="normal" fill="#333" textLength="49.8" lengthAdjust="spacingAndGlyphs" stroke="#333" stroke-width="0.95">Davao</text>
<ellipse cx="307" cy="432.6" rx="3.45" ry="2.55" fill="#fff" stroke="#333" stroke-width="1.35"/>
<text x="357.1" y="437.7" font-family="Liberation Sans" font-size="10.5" font-weight="normal" font-style="normal" fill="#fff" textLength="25.7" lengthAdjust="spacingAndGlyphs" stroke="#f4fbfb" stroke-width="2.6" stroke-opacity="0.75" fill-opacity="0.75" stroke-linejoin="round">Mati</text><text x="357.1" y="437.7" font-family="Liberation Sans" font-size="10.5" font-weight="normal" font-style="normal" fill="#3c3c3c" textLength="25.7" lengthAdjust="spacingAndGlyphs" stroke="#3c3c3c" stroke-width="0.6">Mati</text>
<text x="136.2" y="416.3" font-family="Liberation Sans" font-size="10.5" font-weight="normal" font-style="normal" fill="#fff" textLength="54" lengthAdjust="spacingAndGlyphs" stroke="#f4fbfb" stroke-width="2.6" stroke-opacity="0.75" fill-opacity="0.75" stroke-linejoin="round">Cotabato</text><text x="136.2" y="416.3" font-family="Liberation Sans" font-size="10.5" font-weight="normal" font-style="normal" fill="#3c3c3c" textLength="54" lengthAdjust="spacingAndGlyphs" stroke="#3c3c3c" stroke-width="0.6">Cotabato</text>
<ellipse cx="164.4" cy="421" rx="2.76" ry="2.04" fill="#fff" stroke="#333" stroke-width="1.35"/>
<text x="182.2" y="441" font-family="Liberation Sans" font-size="10.5" font-weight="normal" font-style="normal" fill="#fff" textLength="72" lengthAdjust="spacingAndGlyphs" stroke="#f4fbfb" stroke-width="2.6" stroke-opacity="0.75" fill-opacity="0.75" stroke-linejoin="round">Kidapawan</text><text x="182.2" y="441" font-family="Liberation Sans" font-size="10.5" font-weight="normal" font-style="normal" fill="#3c3c3c" textLength="72" lengthAdjust="spacingAndGlyphs" stroke="#3c3c3c" stroke-width="0.6">Kidapawan</text>
<ellipse cx="252.4" cy="437.5" rx="2.30" ry="1.70" fill="#fff" stroke="#333" stroke-width="1.35"/>
<rect x="229.8" y="161.5" width="31.9" height="9.6" fill="#3d6ec9" stroke="#fff" stroke-width="0.8"/><text x="232.3" y="168.9" font-family="Liberation Sans" font-size="8.6" font-weight="bold" font-style="normal" fill="#fff" textLength="26.899999999999977" lengthAdjust="spacingAndGlyphs" >AH26</text>
<rect x="299.0" y="287.0" width="33.0" height="9.6" fill="#3d6ec9" stroke="#fff" stroke-width="0.8"/><text x="301.5" y="294.40000000000003" font-family="Liberation Sans" font-size="8.6" font-weight="bold" font-style="normal" fill="#fff" textLength="28.0" lengthAdjust="spacingAndGlyphs" >AH26</text>
<rect x="330.8" y="326" width="33.2" height="8.9" fill="#3d6ec9" stroke="#fff" stroke-width="0.8"/><text x="333.3" y="332.7" font-family="Liberation Sans" font-size="8.6" font-weight="bold" font-style="normal" fill="#fff" textLength="28.19999999999999" lengthAdjust="spacingAndGlyphs" >AH26</text>
<defs><linearGradient id="hl" x1="0.2" y1="0.1" x2="0.55" y2="0.9"><stop offset="0" stop-color="#fff" stop-opacity="0.95"/><stop offset="0.6" stop-color="#fff" stop-opacity="0.35"/><stop offset="1" stop-color="#fff" stop-opacity="0"/></linearGradient></defs>
<ellipse cx="504.1" cy="301.7" rx="8.0" ry="6.4" fill="#ff0606" stroke="#6e2a2a" stroke-width="1.0"/>
<ellipse cx="502.8" cy="299.8" rx="6.6" ry="4.4" fill="url(#hl)" transform="rotate(-15 502.8 299.8)"/>
<rect x="57" y="135" width="29.4" height="46" rx="3" fill="#fff"/>
<rect x="57" y="157" width="29.4" height="1.2" fill="#ddd"/>
<rect x="65.7" y="145.2" width="11.6" height="1.9" fill="#000"/>
<rect x="70.55" y="141.3" width="1.9" height="9.8" fill="#000"/>
<rect x="65.7" y="168.6" width="11.6" height="1.9" fill="#000"/>
<polyline points="98.0,409.7 98.0,442.0" fill="none" stroke="#3f5fe6" stroke-width="1.4" stroke-linejoin="round" stroke-linecap="round" />
<rect x="51.7" y="407.8" width="92.8" height="13.9" fill="#fff" fill-opacity="0.5"/>
<rect x="51.7" y="421.7" width="74.7" height="13.4" fill="#fff" fill-opacity="0.5"/>
<polyline points="52.7,407.8 52.7,434.5" stroke="#777" stroke-width="2" fill="none"/>
<polyline points="51.7,421.7 144.5,421.7 144.5,407.8" stroke="#777" stroke-width="2" fill="none"/>
<polyline points="126.4,421.7 126.4,435.1" stroke="#777" stroke-width="2" fill="none"/>
<text x="59.6" y="419.0" font-family="Liberation Sans" font-size="10.2" font-weight="normal" font-style="normal" fill="#333" textLength="39.5" lengthAdjust="spacingAndGlyphs" >100 km</text>
<text x="57.6" y="432.5" font-family="Liberation Sans" font-size="10.2" font-weight="normal" font-style="normal" fill="#333" textLength="31" lengthAdjust="spacingAndGlyphs" >50 mi</text>
<rect x="578.2" y="425.3" width="130" height="16" fill="#fff" fill-opacity="0.7"/>
<text x="584" y="436.7" font-family="Liberation Sans" font-size="10.5" font-weight="normal" font-style="normal" fill="#0078a8" textLength="36.8" lengthAdjust="spacingAndGlyphs" >Leaflet</text>
<text x="625.5" y="436.7" font-family="Liberation Sans" font-size="10.5" font-weight="normal" font-style="normal" fill="#555" textLength="2.5" lengthAdjust="spacingAndGlyphs" >|</text>
<text x="632" y="436.7" font-family="Liberation Sans" font-size="10.5" font-weight="normal" font-style="normal" fill="#555" textLength="63.5" lengthAdjust="spacingAndGlyphs" >GoogleMap</text>
</g>
</svg>
</body></html>
